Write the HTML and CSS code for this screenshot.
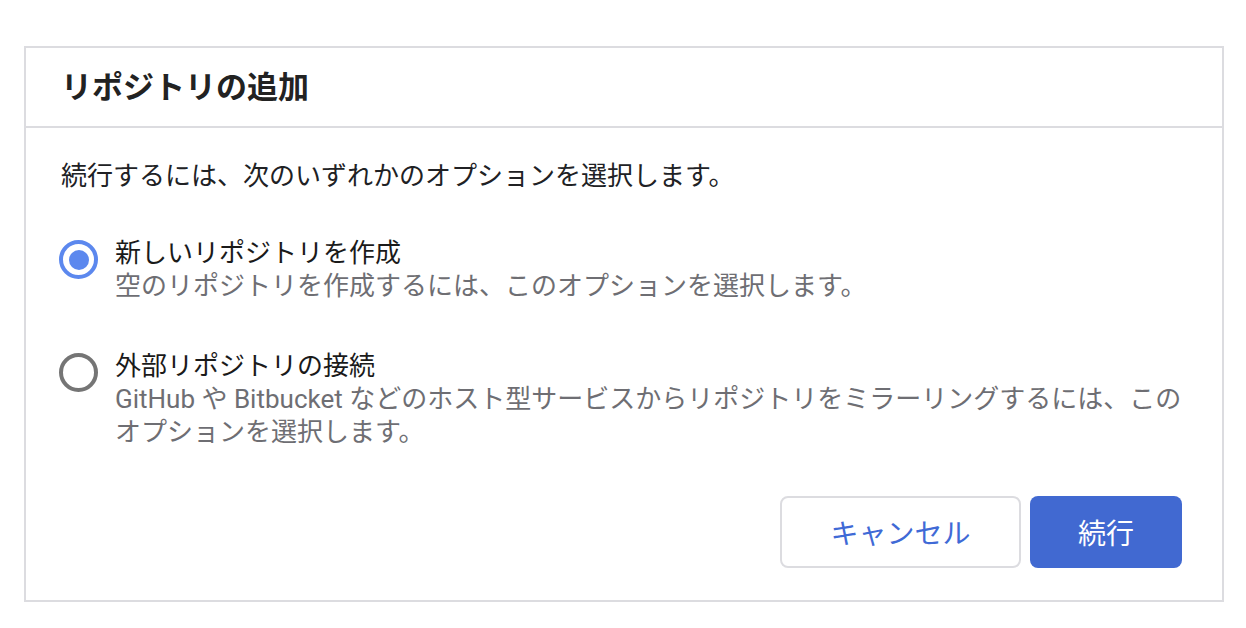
FILE: index.html
```html
<!DOCTYPE html>
<html lang="ja">
<head>
<meta charset="utf-8">
<link rel="stylesheet" href="styles.css">
</head>
<body>
<div class="dialog">
  <div class="dialog-header">
    <h1 class="dialog-title">リポジトリの追加</h1>
  </div>
  <div class="dialog-body">
    <p class="intro">続行するには、次のいずれかのオプションを選択します。</p>
    <div class="options">
      <label class="option">
        <span class="radio radio-checked"><span class="radio-dot"></span></span>
        <span class="option-text">
          <span class="option-title">新しいリポジトリを作成</span>
          <span class="option-desc">空のリポジトリを作成するには、このオプションを選択します。</span>
        </span>
      </label>
      <label class="option">
        <span class="radio"></span>
        <span class="option-text">
          <span class="option-title">外部リポジトリの接続</span>
          <span class="option-desc">GitHub や Bitbucket などのホスト型サービスからリポジトリをミラーリングするには、このオプションを選択します。</span>
        </span>
      </label>
    </div>
    <div class="actions">
      <button class="btn btn-secondary">キャンセル</button>
      <button class="btn btn-primary">続行</button>
    </div>
  </div>
</div>
</body>
</html>
```

FILE: styles.css
```css
* { box-sizing: border-box; }
html, body { margin: 0; padding: 0; background: #ffffff; }
body {
  font-family: Roboto, "Noto Sans CJK JP", sans-serif;
  color: #202124;
  padding: 46px 22px 0 24px;
}
.dialog {
  width: 1200px;
  height: 556px;
  border: 2px solid #dcdce0;
  display: flex;
  flex-direction: column;
}
.dialog-header {
  height: 80px;
  border-bottom: 2px solid #dcdce0;
  display: flex;
  align-items: center;
  padding-left: 35px;
}
.dialog-title {
  margin: 0;
  font-size: 31px;
  font-weight: 700;
  color: #222222;
  line-height: 40px;
  padding-top: 2px;
}
.dialog-body {
  padding: 32px 40px 32px 35px;
  display: flex;
  flex-direction: column;
  flex: 1;
}
.intro {
  margin: 0 0 44px 0;
  font-size: 26px;
  line-height: 33px;
  color: #202124;
}
.options {
  display: flex;
  flex-direction: column;
  gap: 47px;
}
.option {
  display: flex;
  align-items: flex-start;
  gap: 17px;
}
.radio {
  flex: none;
  width: 39px;
  height: 39px;
  margin-left: -2px;
  margin-top: 3px;
  border-radius: 50%;
  border: 4px solid #757575;
  display: flex;
  align-items: center;
  justify-content: center;
}
.radio-checked { border-color: #5c88ee; }
.radio-dot {
  width: 20px;
  height: 20px;
  border-radius: 50%;
  background: #5c88ee;
}
.option-text {
  display: flex;
  flex-direction: column;
  font-size: 26px;
  line-height: 33px;
}
.option-title { color: #1a1a1a; }
.option-desc { color: #6e6e73; }
.actions {
  margin-top: auto;
  display: flex;
  justify-content: flex-end;
  gap: 9px;
}
.btn {
  height: 72px;
  border-radius: 8px;
  font-family: Roboto, "Noto Sans CJK JP", sans-serif;
  font-size: 28px;
  cursor: pointer;
}
.btn-secondary {
  width: 241px;
  background: #ffffff;
  border: 2px solid #dcdce0;
  color: #3f6ad6;
}
.btn-primary {
  width: 152px;
  background: #4169d1;
  border: none;
  color: #ffffff;
}
```
